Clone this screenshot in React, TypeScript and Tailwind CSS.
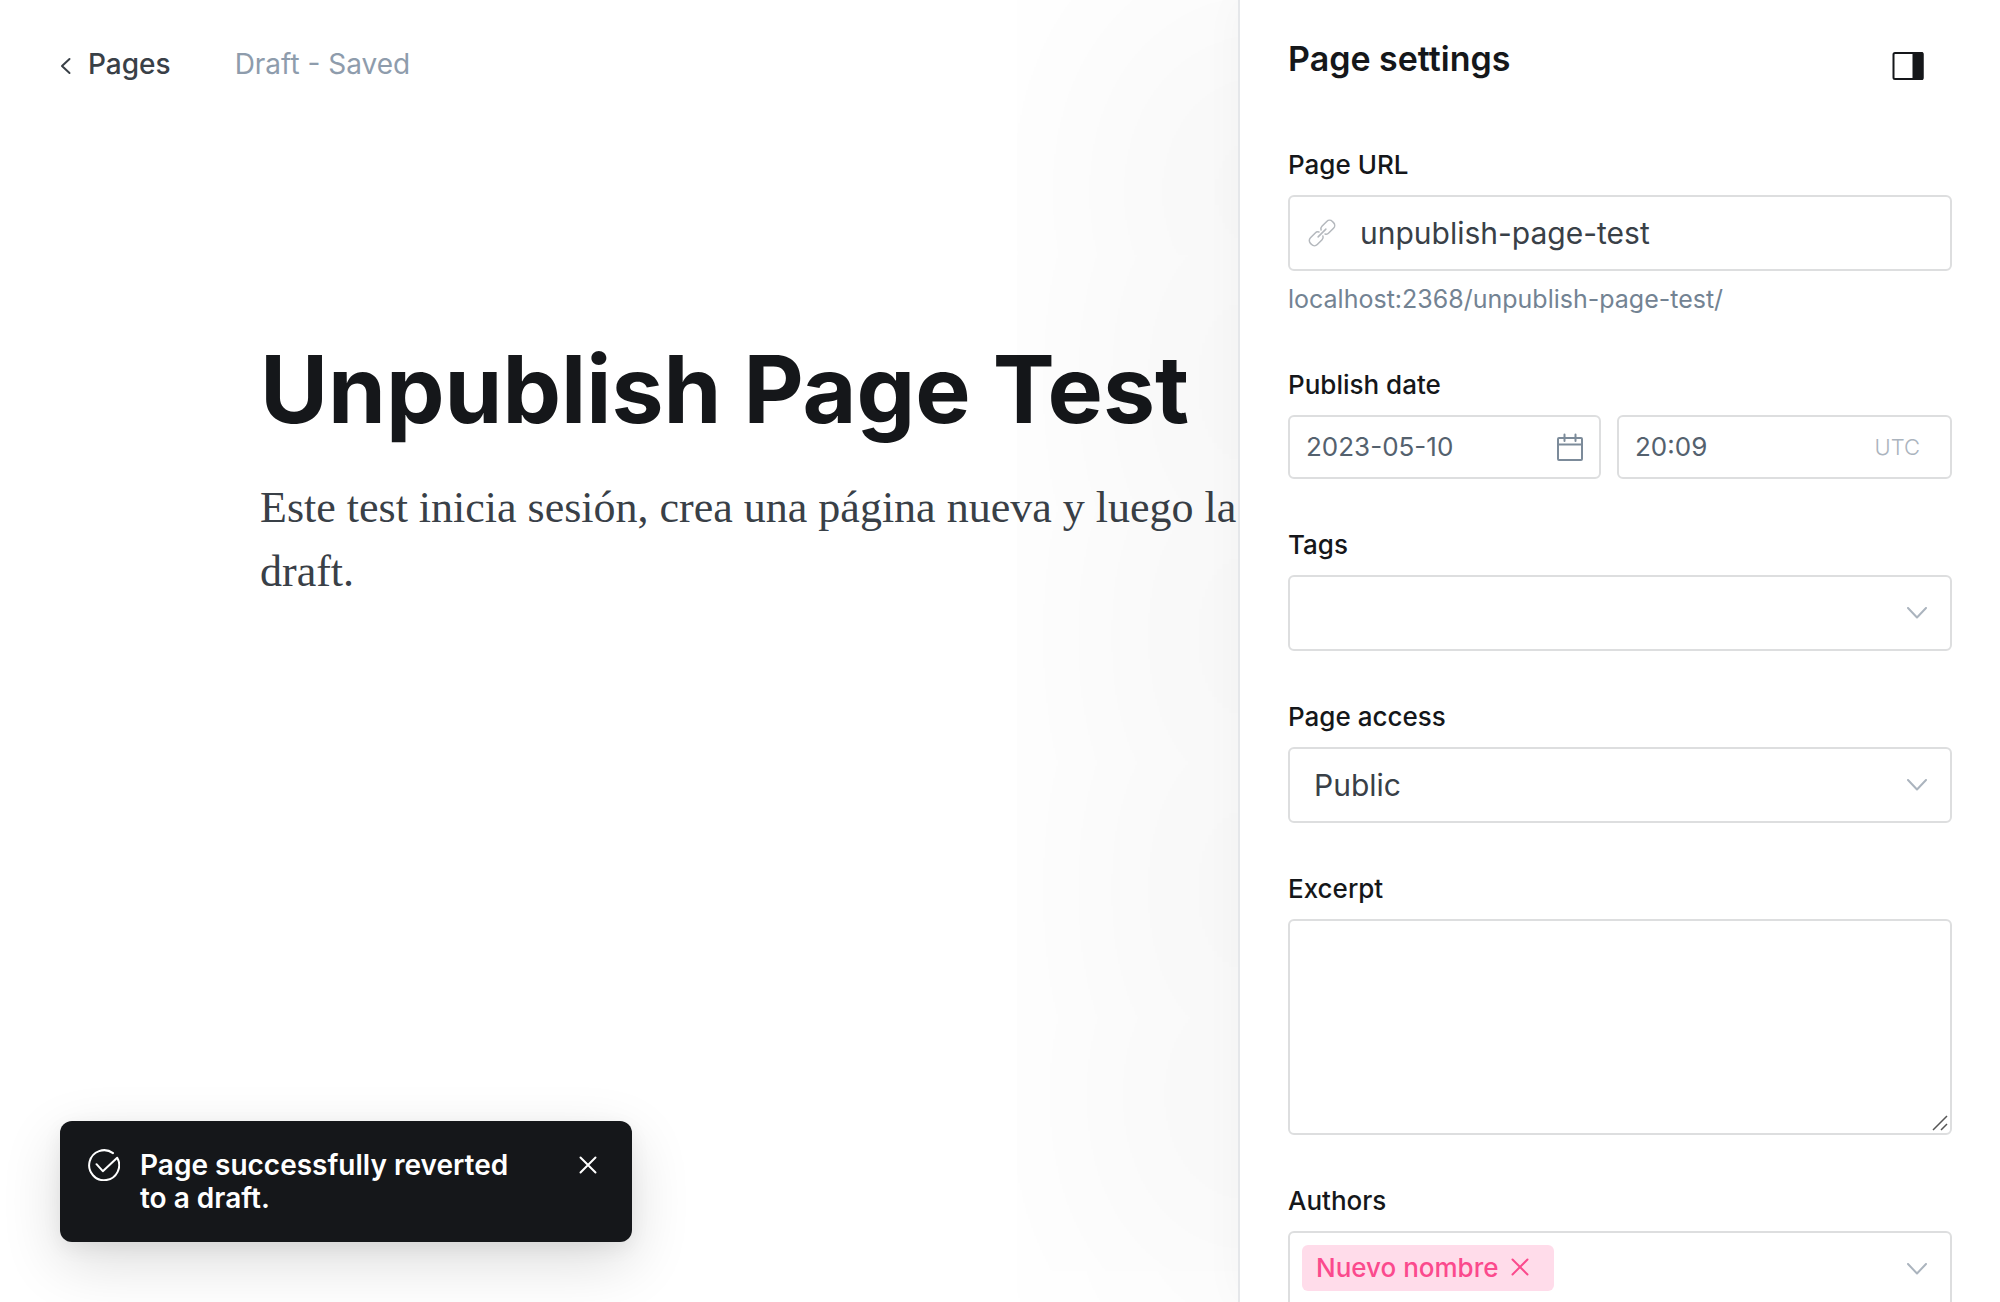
import React from "react";

const fieldBox = "w-full rounded-md border-2 border-[#dddedf] bg-white outline-none";

function Chevron() {
  return (
    <svg className="h-3 w-[22px] text-[#abb4be]" viewBox="0 0 22 12" fill="none" stroke="currentColor" strokeWidth="2" strokeLinecap="round" strokeLinejoin="round" aria-hidden="true">
      <path d="M2 1l9 9.5L20 1" />
    </svg>
  );
}

function Cross({ className }: { className: string }) {
  return (
    <svg className={className} viewBox="0 0 18 18" fill="none" stroke="currentColor" strokeWidth="2" strokeLinecap="round" aria-hidden="true">
      <path d="M1.5 1.5l15 15M16.5 1.5l-15 15" />
    </svg>
  );
}

function Field({ label, htmlFor, children }: { label: string; htmlFor: string; children: React.ReactNode }) {
  return (
    <div className="flex flex-col">
      <label htmlFor={htmlFor} className="mb-3.5 text-[26px] leading-8 font-medium text-[#15171a]">
        {label}
      </label>
      {children}
    </div>
  );
}

function Editor() {
  return (
    <main className="min-w-0 flex-1 overflow-hidden bg-white">
      <header className="flex items-center gap-16 px-[60px] pt-12 leading-8">
        <a href="#pages" className="flex items-center gap-4 text-[28px] font-medium text-[#394047]">
          <svg className="mt-1 h-[18px] w-3" viewBox="0 0 12 18" fill="none" stroke="currentColor" strokeWidth="2" strokeLinecap="round" strokeLinejoin="round" aria-hidden="true">
            <path d="M9.500 2L2 9l7.500 7" />
          </svg>
          Pages
        </a>
        <span className="text-[28px] text-[#8e9cac]">Draft - Saved</span>
      </header>
      <article className="pt-[249px] pl-[260px] whitespace-nowrap">
        <h1 className="text-[93px] leading-[120px] font-bold text-[#15171a]">Unpublish Page Test</h1>
        <p className="mt-[27px] font-['Liberation_Serif',serif] text-[44px] leading-[64px] text-[#394047]">
          Este test inicia sesión, crea una página nueva y luego la
          <br />
          draft.
        </p>
      </article>
    </main>
  );
}

function Toast() {
  return (
    <div role="status" className="absolute bottom-[60px] left-[60px] z-20 flex w-[572px] items-start rounded-xl bg-[#15171a] pt-7 pr-[35px] pb-[27px] pl-7 text-white shadow-[0_20px_60px_rgba(0,0,0,0.14),0_6px_20px_rgba(0,0,0,0.06)]">
      <svg className="h-8 w-8 shrink-0" viewBox="0 0 32 32" fill="none" stroke="currentColor" strokeWidth="2" strokeLinecap="round" strokeLinejoin="round" aria-hidden="true">
        <path d="M8.500 15.200l6.300 7L29.200 8.800a15 15 0 1 1-4.200-4.700" />
      </svg>
      <p className="ml-5 flex-1 text-[28px] leading-[33px] font-semibold">
        Page successfully reverted
        <br />
        to a draft.
      </p>
      <button type="button" aria-label="Dismiss" className="mt-[7px]">
        <Cross className="h-[18px] w-[18px]" />
      </button>
    </div>
  );
}

function Settings() {
  return (
    <aside className="relative z-10 w-[762px] shrink-0 border-l-2 border-[#e5e7ea] bg-white px-12 pt-[39px] text-[#394047] shadow-[-120px_0_280px_rgba(0,0,0,0.045),0_0_40px_rgba(0,0,0,0.03)]">
      <div className="flex items-start justify-between pr-7">
        <h2 className="text-[34px] leading-10 font-semibold text-[#15171a]">Page settings</h2>
        <button type="button" aria-label="Toggle settings" className="pt-[13px]">
          <svg className="h-7 w-8 text-[#15171a]" viewBox="0 0 32 28" fill="none" aria-hidden="true">
            <rect x="1.500" y="1" width="29" height="26" rx="1.500" stroke="currentColor" strokeWidth="2" />
            <path d="M20.500 0H30a1.500 1.500 0 0 1 1.500 1.500v25A1.500 1.500 0 0 1 30 28h-9.500z" fill="currentColor" />
          </svg>
        </button>
      </div>
      <form className="mt-[69px] flex flex-col gap-[50px]">
        <Field label="Page URL" htmlFor="url">
          <div className="relative">
            <input id="url" defaultValue="unpublish-page-test" className={`${fieldBox} h-[76px] pr-4 pl-[70px] text-[30px]`} />
            <svg className="pointer-events-none absolute top-6 left-5 h-7 w-7 overflow-visible text-[#b4b8bd]" viewBox="0 0 28 28" fill="none" stroke="currentColor" strokeWidth="1.500" strokeLinecap="round" strokeLinejoin="round" aria-hidden="true">
              <g transform="rotate(-45 14 14)">
                <path d="M8.500 14h11" />
                <path d="M12.500 16.800c-.6 1.200-1.700 2-3.200 2H2.500a4 4 0 0 1-4-4v-1.600a4 4 0 0 1 4-4h6.800c1.500 0 2.600.8 3.200 2" />
                <path d="M15.500 11.200c.6-1.200 1.700-2 3.200-2h6.800a4 4 0 0 1 4 4v1.600a4 4 0 0 1-4 4h-6.800c-1.500 0-2.600-.8-3.200-2" />
              </g>
            </svg>
          </div>
          <p className="mt-3 pb-1 text-[25px] leading-8 text-[#738393]">localhost:2368/unpublish-page-test/</p>
        </Field>

        <Field label="Publish date" htmlFor="date">
          <div className="flex gap-4">
            <div className="relative w-[313px]">
              <input id="date" defaultValue="2023-05-10" className={`${fieldBox} h-16 pr-14 pb-0.5 pl-4 text-[26px] text-[#54616e]`} />
              <svg className="pointer-events-none absolute top-[18px] right-[18px] h-7 w-[26px] text-[#7c8b9a]" viewBox="0 0 26 28" fill="none" stroke="currentColor" strokeWidth="2" strokeLinecap="round" strokeLinejoin="round" aria-hidden="true">
                <rect x="1" y="5" width="24" height="22" rx="1" />
                <path d="M1 11.500h24M7.500 1.500v6.500M18.500 1.500v6.500" />
              </svg>
            </div>
            <div className="relative flex-1">
              <input id="time" aria-label="Publish time" defaultValue="20:09" className={`${fieldBox} h-16 pr-24 pb-0.5 pl-4 text-[26px] text-[#54616e]`} />
              <span className="pointer-events-none absolute top-4 right-8 text-[22px] leading-8 font-light text-[#abb4be]">UTC</span>
            </div>
          </div>
        </Field>

        <Field label="Tags" htmlFor="tags">
          <div className="relative">
            <input id="tags" role="combobox" aria-expanded="false" aria-controls="tags" className={`${fieldBox} h-[76px] px-6 text-[30px]`} />
            <span className="pointer-events-none absolute top-8 right-6"><Chevron /></span>
          </div>
        </Field>

        <Field label="Page access" htmlFor="access">
          <div className="relative">
            <select id="access" className={`${fieldBox} h-[76px] appearance-none px-6 text-[30px]`}>
              <option>Public</option>
            </select>
            <span className="pointer-events-none absolute top-8 right-6"><Chevron /></span>
          </div>
        </Field>

        <Field label="Excerpt" htmlFor="excerpt">
          <div className="relative flex">
            <textarea id="excerpt" className={`${fieldBox} h-[216px] resize-none p-4 text-[30px]`} />
            <svg className="pointer-events-none absolute right-1 bottom-1 h-4 w-4 text-[#555]" viewBox="0 0 16 16" fill="none" stroke="currentColor" strokeWidth="1.500" aria-hidden="true">
              <path d="M1 15L15 1M9 15l6-6" />
            </svg>
          </div>
        </Field>

        <Field label="Authors" htmlFor="authors">
          <div className="relative flex h-[76px] rounded-md border-2 border-[#dddedf] p-3">
            <span className="flex h-[46px] items-center gap-3 rounded-md bg-[#ffdcea] pr-[25px] pb-0.5 pl-3.5 text-[26px] font-medium text-[#fb4a8d]">
              Nuevo nombre
              <button type="button" aria-label="Remove author">
                <Cross className="h-[18px] w-[18px]" />
              </button>
            </span>
            <input id="authors" className="ml-2 min-w-0 flex-1 outline-none" />
            <span className="pointer-events-none absolute top-[30px] right-[22px]"><Chevron /></span>
          </div>
        </Field>
      </form>
    </aside>
  );
}

export default function App() {
  return (
    <div className="relative flex h-screen overflow-hidden bg-white font-['Inter',sans-serif]">
      <Editor />
      <Settings />
      <Toast />
    </div>
  );
}
